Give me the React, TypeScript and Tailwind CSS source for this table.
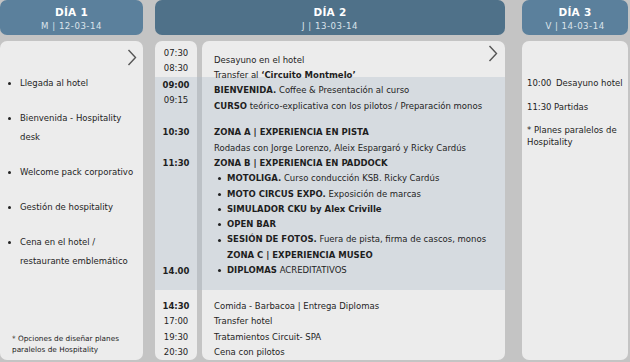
import React from "react";

const Chevron = () => (
  <svg width="10" height="17" viewBox="0 0 10 17" fill="none">
    <polyline points="1.5,1 8.5,8.5 1.5,16" stroke="#555" strokeWidth="1.4" fill="none" />
  </svg>
);

const Header = ({ title, sub, dark }: { title: string; sub: string; dark?: boolean }) => (
  <div
    className={`h-[35px] rounded-[7px] flex flex-col items-center pt-[6px] ${
      dark ? "bg-[#4f7189]" : "bg-[#5b809c]"
    }`}
  >
    <div className="text-[10.5px] leading-[12px] font-bold text-white tracking-[0.3px]">{title}</div>
    <div className="mt-[3px] text-[8.6px] leading-[11px] tracking-[0.5px] text-[#dbe4eb]">{sub}</div>
  </div>
);

const Dot = () => (
  <span className="w-[13px] pl-[4px] flex items-center shrink-0">
    <span className="w-[3px] h-[3px] rounded-full bg-[#222]" />
  </span>
);

export default function App() {
  return (
    <div className="w-[630px] h-[362px] bg-[#c4c4c4] flex pb-[2px] overflow-hidden font-['DejaVu_Sans',sans-serif] text-[#1e1e1e] text-[8.5px]">
      {/* Day 1 */}
      <div className="w-[143px] flex flex-col">
        <Header title="DÍA 1" sub="M | 12-03-14" />
        <div className="mt-[6px] flex-1 relative flex flex-col bg-[#ececec] rounded-[7px] pl-[8px] pt-[32.5px] pb-[5.5px]">
          <div className="absolute top-[8px] right-[6px]">
            <Chevron />
          </div>
          {[
            ["Llegada al hotel"],
            ["Bienvenida - Hospitality", "desk"],
            ["Welcome pack corporativo"],
            ["Gestión de hospitality"],
            ["Cena en el hotel /", "restaurante emblemático"],
          ].map((lines, i) => (
            <div key={i} className={`flex ${i > 0 ? "mt-[16px]" : ""}`}>
              <span className="w-[12px] h-[19px] flex items-center shrink-0">
                <span className="w-[3px] h-[3px] rounded-full bg-[#222]" />
              </span>
              <div className="leading-[19px] whitespace-nowrap">
                {lines.map((l, j) => (
                  <div key={j}>{l}</div>
                ))}
              </div>
            </div>
          ))}
          <div className="mt-auto pl-[4px] text-[7.3px] leading-[11px] whitespace-nowrap">
            <div>* Opciones de diseñar planes</div>
            <div>paralelos de Hospitality</div>
          </div>
        </div>
      </div>

      {/* Day 2 */}
      <div className="ml-[12px] w-[350px] flex flex-col">
        <Header title="DÍA 2" sub="J | 13-03-14" dark />
        <div className="mt-[6px] flex-1 relative flex gap-[5px]">
          <div className="absolute left-0 right-0 top-[36px] h-[213px] bg-[#bcc1c6] rounded-[6px]" />
          {/* times */}
          <div className="w-[42px] relative z-10 rounded-[7px] overflow-hidden text-center">
            <div className="h-[36px] bg-[#ececec] pt-[4.5px] leading-[15px]">
              <div>07:30</div>
              <div>08:30</div>
            </div>
            <div className="h-[213px] bg-[#d6dbe0] leading-[15px] pt-[0.5px]">
              <div className="font-bold">09:00</div>
              <div>09:15</div>
              <div className="font-bold mt-[17.5px]">10:30</div>
              <div className="font-bold mt-[16px]">11:30</div>
              <div className="font-bold mt-[93px]">14.00</div>
            </div>
            <div className="h-[70px] bg-[#ececec] pt-[8.5px] leading-[15.5px]">
              <div className="font-bold">14:30</div>
              <div>17:00</div>
              <div>19:30</div>
              <div>20:30</div>
            </div>
          </div>
          {/* content */}
          <div className="flex-1 relative z-10 rounded-[7px] overflow-hidden whitespace-nowrap">
            <div className="h-[36px] bg-[#ececec] pt-[12px] pl-[12px] leading-[14.5px]">
              <div>Desayuno en el hotel</div>
              <div>
                Transfer al <b>‘Circuito Montmelo’</b>
              </div>
            </div>
            <div className="h-[213px] bg-[#d6dbe0] pt-[6.4px] pl-[12px] leading-[15.3px]">
              <div>
                <b>BIENVENIDA.</b> Coffee &amp; Presentación al curso
              </div>
              <div>
                <b>CURSO</b> teórico-explicativa con los pilotos / Preparación monos
              </div>
              <div className="mt-[11.4px] font-bold">ZONA A | EXPERIENCIA EN PISTA</div>
              <div>Rodadas con Jorge Lorenzo, Aleix Espargaró y Ricky Cardús</div>
              <div className="font-bold">ZONA B | EXPERIENCIA EN PADDOCK</div>
              <div className="flex">
                <Dot />
                <span>
                  <b>MOTOLIGA.</b> Curso conducción KSB. Ricky Cardús
                </span>
              </div>
              <div className="flex">
                <Dot />
                <span>
                  <b>MOTO CIRCUS EXPO.</b> Exposición de marcas
                </span>
              </div>
              <div className="flex">
                <Dot />
                <b>SIMULADOR CKU by Alex Criville</b>
              </div>
              <div className="flex">
                <Dot />
                <b>OPEN BAR</b>
              </div>
              <div className="flex">
                <Dot />
                <span>
                  <b>SESIÓN DE FOTOS.</b> Fuera de pista, firma de cascos, monos
                </span>
              </div>
              <div className="pl-[13px] font-bold">ZONA C | EXPERIENCIA MUSEO</div>
              <div className="flex">
                <Dot />
                <span>
                  <b>DIPLOMAS</b> ACREDITATIVOS
                </span>
              </div>
            </div>
            <div className="h-[70px] bg-[#ececec] pt-[8.5px] pl-[12px] leading-[15.5px]">
              <div>Comida - Barbacoa | Entrega Diplomas</div>
              <div>Transfer hotel</div>
              <div>Tratamientos Circuit- SPA</div>
              <div>Cena con pilotos</div>
            </div>
            <div className="absolute top-[4px] right-[7px]">
              <Chevron />
            </div>
          </div>
        </div>
      </div>

      {/* Day 3 */}
      <div className="ml-[17px] w-[106px] flex flex-col">
        <Header title="DÍA 3" sub="V | 14-03-14" />
        <div className="mt-[6px] flex-1 bg-[#ececec] rounded-[7px] pl-[5px] pt-[36px] leading-[12px] whitespace-nowrap">
          <div className="flex">
            <span className="w-[29px] shrink-0">10:00</span>
            <span>Desayuno hotel</span>
          </div>
          <div className="flex mt-[12px]">
            <span className="w-[27px] shrink-0">11:30</span>
            <span>Partidas</span>
          </div>
          <div className="mt-[11px]">
            <div>* Planes paralelos de</div>
            <div>Hospitality</div>
          </div>
        </div>
      </div>
    </div>
  );
}
